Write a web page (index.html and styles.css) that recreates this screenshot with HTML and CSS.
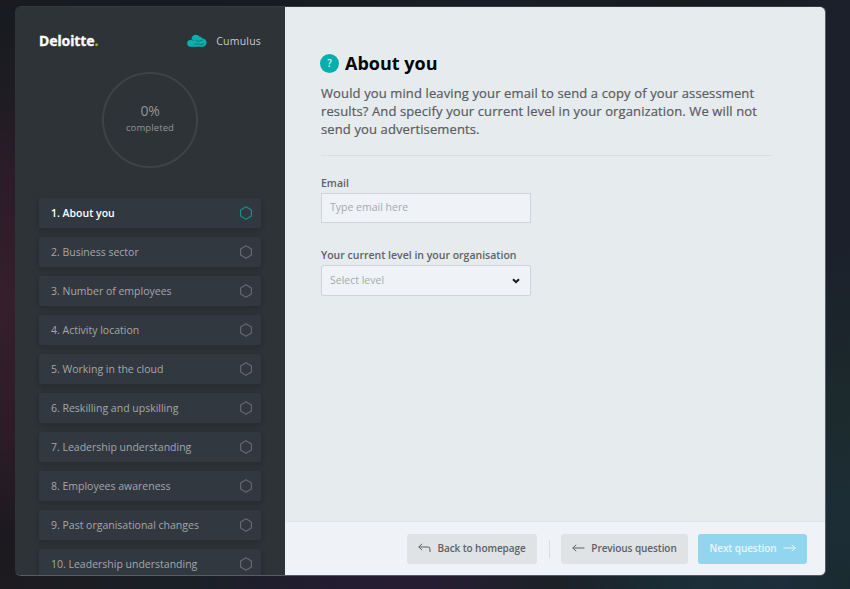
FILE: index.html
```html
<!DOCTYPE html>
<html lang="en">
<head>
<meta charset="utf-8">
<title>Cumulus assessment</title>
<link rel="stylesheet" href="styles.css">
</head>
<body>
<svg class="defs" width="0" height="0" aria-hidden="true">
  <symbol id="hex" viewBox="0 0 14 14"><path d="M7 .8 12.4 4v6L7 13.2 1.6 10V4Z" fill="none" stroke="currentColor" stroke-width="1.15" stroke-linejoin="round"/></symbol>
</svg>
<div class="window">
  <aside class="sidebar">
    <header class="brand">
      <div class="logo">Deloitte<span class="logo-dot">.</span></div>
      <div class="product">
        <svg width="20" height="14" viewBox="0 0 20 14"><g fill="#09b1ae"><circle cx="3.6" cy="9.3" r="3.4"/><circle cx="8.8" cy="5" r="4.3"/><circle cx="12" cy="5.6" r="3.2"/><circle cx="15.4" cy="8.6" r="4.2"/><rect x="3.4" y="6" width="12" height="6.8" rx="2"/></g><path d="M3.6 5.4q2-.4 3 1.6M8.6 6.4l2.4 1 4.4-1.2M7.6 10h3.4l2.4.6 3.6-.8" stroke="#1d6266" stroke-width=".8" fill="none"/></svg>
        <span class="product-name">Cumulus</span>
      </div>
    </header>
    <div class="progress"><span class="percent">0%</span><span class="done">completed</span></div>
    <ol class="steps">
      <li class="step active"><span>1. About you</span><svg class="hex"><use href="#hex"/></svg></li>
      <li class="step"><span>2. Business sector</span><svg class="hex"><use href="#hex"/></svg></li>
      <li class="step"><span>3. Number of employees</span><svg class="hex"><use href="#hex"/></svg></li>
      <li class="step"><span>4. Activity location</span><svg class="hex"><use href="#hex"/></svg></li>
      <li class="step"><span>5. Working in the cloud</span><svg class="hex"><use href="#hex"/></svg></li>
      <li class="step"><span>6. Reskilling and upskilling</span><svg class="hex"><use href="#hex"/></svg></li>
      <li class="step"><span>7. Leadership understanding</span><svg class="hex"><use href="#hex"/></svg></li>
      <li class="step"><span>8. Employees awareness</span><svg class="hex"><use href="#hex"/></svg></li>
      <li class="step"><span>9. Past organisational changes</span><svg class="hex"><use href="#hex"/></svg></li>
      <li class="step"><span>10. Leadership understanding</span><svg class="hex"><use href="#hex"/></svg></li>
    </ol>
  </aside>
  <main class="main">
    <section class="content">
      <div class="heading"><span class="help">?</span><h1>About you</h1></div>
      <p class="intro">Would you mind leaving your email to send a copy of your assessment<br>results? And specify your current level in your organization. We will not<br>send you advertisements.</p>
      <label class="label">Email</label>
      <div class="field"><span>Type email here</span></div>
      <label class="label second">Your current level in your organisation</label>
      <div class="field select"><span>Select level</span>
        <svg width="8" height="6" viewBox="0 0 8 6"><path d="M1 1.3 4 4.2 7 1.3" fill="none" stroke="#15181b" stroke-width="2"/></svg>
      </div>
    </section>
    <footer class="footer">
      <div class="btn back"><svg width="13" height="10" viewBox="0 0 13 10"><path d="M4.2.8.8 4 4.2 7.2M.8 4H10q2 0 2 2v3" fill="none" stroke="currentColor"/></svg><span>Back to homepage</span></div>
      <div class="divider"></div>
      <div class="btn prev"><svg width="13" height="8" viewBox="0 0 13 8"><path d="M4.2.8.8 4l3.4 3.2M.8 4h11.7" fill="none" stroke="currentColor"/></svg><span>Previous question</span></div>
      <div class="btn next"><span>Next question</span><svg width="13" height="8" viewBox="0 0 13 8"><path d="M8.8.8 12.2 4 8.8 7.2M12.2 4H.5" fill="none" stroke="currentColor"/></svg></div>
    </footer>
  </main>
</div>
</body>
</html>
```

FILE: styles.css
```css
* { box-sizing: border-box; }
body {
  margin: 0;
  width: 850px;
  height: 589px;
  padding: 6px 24px 13px 15px;
  overflow: hidden;
  font-family: "Open Sans", "Noto Sans", sans-serif;
  background:
    linear-gradient(to right, #1d1b20, #1a2026 180px, #231c30 330px, #261d33 420px, #1c2027 550px, #1b3039 700px, #1e2e3a 780px, #1a2a31 850px) 0 575px / 850px 14px no-repeat,
    linear-gradient(to right, #191b1f, #161b1f 200px, #1b1e26 500px, #161b1c 680px, #1b202b 850px) 0 0 / 850px 7px no-repeat,
    linear-gradient(to bottom, #1b202b, #1b202b 240px, #1c2a2d 410px, #1d2d36 520px, #1a2a31) 425px 0 / 425px 589px no-repeat,
    linear-gradient(to bottom, #171b20 0, #1d1c22 80px, #2d1c29 190px, #351f2c 300px, #2d1c28 430px, #1c191f 540px, #1d1b20 589px);
}
.defs { display: block; }
.window {
  display: flex;
  width: 811px;
  height: 570px;
  border-radius: 6px;
  overflow: hidden;
  border: 1px solid #565e63;
  border-width: 1px 1px 1px 0;
  border-top-color: #343a3f;
}
.sidebar {
  width: 270px;
  flex: none;
  background: #2d3337;
  padding: 0 24px;
  overflow: hidden;
}
.brand { display: flex; justify-content: space-between; height: 65px; padding-top: 24px; }
.logo { color: #fff; font-family: "Noto Sans", "Open Sans", sans-serif; font-weight: 700; font-size: 14px; line-height: 20px; letter-spacing: -.1px; -webkit-text-stroke: .3px currentColor; }
.logo-dot { color: #86bc25; }
.product { display: flex; height: 19px; align-items: center; gap: 9px; color: #c8cacc; }
.product-name { font-size: 10.5px; line-height: 18px; letter-spacing: .2px; }
.progress {
  width: 96px;
  height: 96px;
  margin: 0 auto;
  border: 2.5px solid #404247;
  border-radius: 50%;
  display: flex;
  flex-direction: column;
  align-items: center;
  padding-top: 27px;
  color: #929597;
}
.percent { font-size: 14px; line-height: 20px; letter-spacing: -.3px; }
.done { font-size: 9.5px; line-height: 14px; letter-spacing: .1px; }
.steps { list-style: none; margin: 30px 0 0; padding: 0; display: flex; flex-direction: column; gap: 9px; }
.step {
  height: 30px;
  flex: none;
  display: flex;
  justify-content: space-between;
  align-items: center;
  padding: 0 8px 0 12px;
  border-radius: 2px;
  background: #323840;
  box-shadow: 0 2px 5px rgba(20,24,27,.3);
  font-size: 10.5px;
  color: #a4a7aa;
  white-space: nowrap;
}
.hex { width: 14px; height: 14px; color: #656970; }
.active { color: #fff; font-weight: 600; }
.active .hex { color: #138f8f; }
.main { flex: 1; display: flex; flex-direction: column; background: #e6ebee; }
.content { flex: 1; padding: 44px 53px 0 36px; }
.heading { display: flex; align-items: center; gap: 6px; height: 24px; margin-left: -1px; }
.help {
  width: 19px;
  height: 19px;
  border-radius: 50%;
  background: #07afac;
  color: #d8f3f2;
  font-size: 10px;
  font-weight: 600;
  line-height: 19px;
  text-align: center;
}
h1 { margin: 0; font-size: 18px; line-height: 24px; color: #050607; font-weight: 700; }
.intro {
  margin: 9px 0 0;
  height: 72px;
  border-bottom: 1px solid #dadfe1;
  color: #575c60;
  font-size: 13px;
  font-weight: 500;
  line-height: 18px;
  letter-spacing: .12px;
  -webkit-text-stroke: .2px currentColor;
  white-space: nowrap;
}
.label { display: block; margin-top: 19px; height: 18px; line-height: 16px; font-size: 10.5px; font-weight: 600; color: #5d6266; }
.second { margin-top: 24px; height: 18px; }
.field {
  width: 210px;
  height: 30px;
  border: 1px solid #d0d4d7;
  background: #eff3f7;
  padding: 0 10px 2px 8px;
  display: flex;
  align-items: center;
  justify-content: space-between;
  color: #a6aaad;
  font-size: 10.5px;
}
.select { border-radius: 2px; height: 31px; padding-bottom: 1px; }
.select svg { margin-top: 2px; }
.footer {
  height: 54px;
  background: #eff3f7;
  border-top: 1px solid #e0e5e7;
  display: flex;
  align-items: center;
  justify-content: flex-end;
  padding-right: 18px;
}
.btn {
  height: 30px;
  display: flex;
  align-items: center;
  justify-content: center;
  gap: 6px;
  border-radius: 3px;
  background: #dfe3e6;
  color: #5c6165;
  font-size: 10px;
  font-weight: 600;
  letter-spacing: -.08px;
  white-space: nowrap;
  padding-bottom: 2px;
}
.back { width: 130px; }
.divider { width: 1px; height: 18px; background: #d9dde0; margin: 0 11px 0 12px; }
.prev { width: 127px; }
.next { width: 109px; margin-left: 10px; background: #91d5ee; color: #eaf7fc; }
```
